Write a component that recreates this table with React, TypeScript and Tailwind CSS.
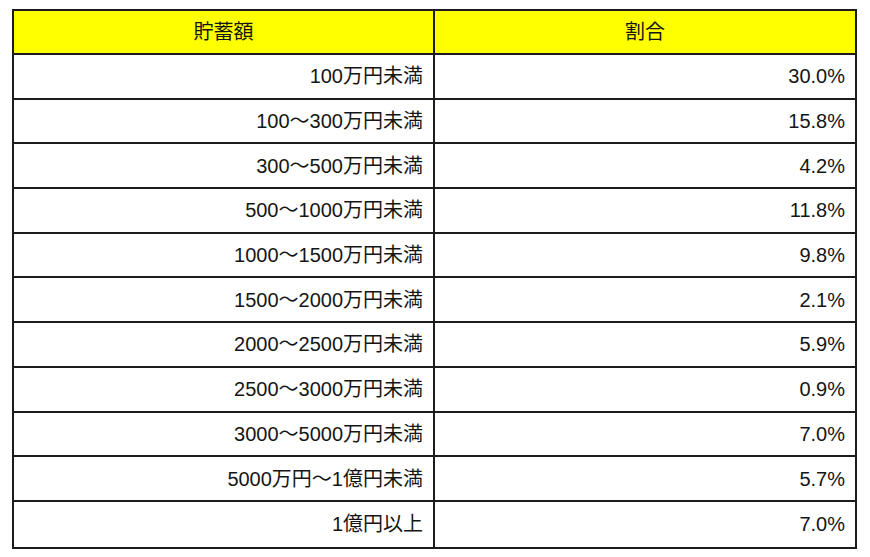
import React from "react";

const rows: [string, string][] = [
  ["100万円未満", "30.0%"],
  ["100〜300万円未満", "15.8%"],
  ["300〜500万円未満", "4.2%"],
  ["500〜1000万円未満", "11.8%"],
  ["1000〜1500万円未満", "9.8%"],
  ["1500〜2000万円未満", "2.1%"],
  ["2000〜2500万円未満", "5.9%"],
  ["2500〜3000万円未満", "0.9%"],
  ["3000〜5000万円未満", "7.0%"],
  ["5000万円〜1億円未満", "5.7%"],
  ["1億円以上", "7.0%"],
];

export default function App() {
  return (
    <div
      className="w-[870px] h-[557px] bg-white pt-[9px] pl-[12px]"
      style={{ fontFamily: '"Liberation Sans", Arial, "Noto Sans CJK JP", sans-serif' }}
    >
      <div className="w-[845px] border-2 border-[#1c1c1c] text-[20px] leading-none text-[#151515]">
        <div className="grid grid-cols-[421px_1fr] h-[44px] bg-[#ffff00] border-b-2 border-[#1c1c1c]">
          <div className="flex items-center justify-center border-r-2 border-[#1c1c1c]">貯蓄額</div>
          <div className="flex items-center justify-center">割合</div>
        </div>
        {rows.map(([a, b], i) => (
          <div
            key={i}
            className={
              "grid grid-cols-[421px_1fr] h-[44.7px] " +
              (i < rows.length - 1 ? "border-b-2 border-[#1c1c1c]" : "")
            }
          >
            <div className="flex items-center justify-end pr-[10px] border-r-2 border-[#1c1c1c]">{a}</div>
            <div className="flex items-center justify-end pr-[10px]">{b}</div>
          </div>
        ))}
      </div>
    </div>
  );
}
